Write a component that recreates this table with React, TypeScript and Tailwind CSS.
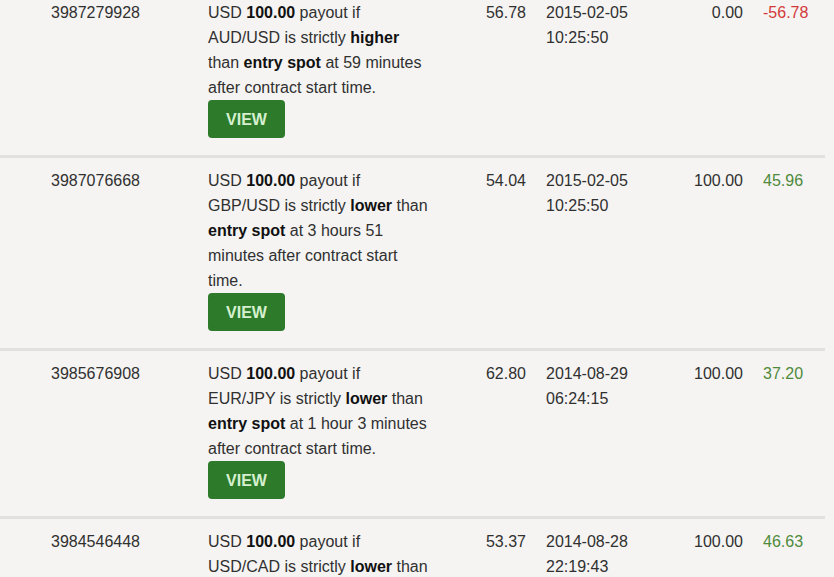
import React from "react";

interface Trade {
  id: string;
  desc: React.ReactNode;
  stake: string;
  date: string;
  time: string;
  payout: string;
  profit: string;
}

const B = ({ children }: { children: React.ReactNode }) => <b className="font-bold text-[#111]">{children}</b>;

const trades: Trade[] = [
  {
    id: "3987279928",
    desc: (
      <>
        USD <B>100.00</B> payout if AUD/USD is strictly <B>higher</B> than <B>entry spot</B> at 59 minutes after contract start time.
      </>
    ),
    stake: "56.78",
    date: "2015-02-05",
    time: "10:25:50",
    payout: "0.00",
    profit: "-56.78",
  },
  {
    id: "3987076668",
    desc: (
      <>
        USD <B>100.00</B> payout if GBP/USD is strictly <B>lower</B> than <B>entry spot</B> at 3 hours 51 minutes after contract start time.
      </>
    ),
    stake: "54.04",
    date: "2015-02-05",
    time: "10:25:50",
    payout: "100.00",
    profit: "45.96",
  },
  {
    id: "3985676908",
    desc: (
      <>
        USD <B>100.00</B> payout if EUR/JPY is strictly <B>lower</B> than <B>entry spot</B> at 1 hour 3 minutes after contract start time.
      </>
    ),
    stake: "62.80",
    date: "2014-08-29",
    time: "06:24:15",
    payout: "100.00",
    profit: "37.20",
  },
  {
    id: "3984546448",
    desc: (
      <>
        USD <B>100.00</B> payout if USD/CAD is strictly <B>lower</B> than <B>entry spot</B> at 2 hours after contract start time.
      </>
    ),
    stake: "53.37",
    date: "2014-08-28",
    time: "22:19:43",
    payout: "100.00",
    profit: "46.63",
  },
];

export default function App() {
  return (
    <div
      className="w-[834px] h-[577px] overflow-hidden bg-[#f5f4f2] text-[#303030] text-[16px] leading-[25px]"
      style={{ fontFamily: '"Liberation Sans", Arial, sans-serif' }}
    >
      <div className="w-[825px]">
        {trades.map((t, i) => {
          const neg = t.profit.startsWith("-");
          return (
            <div
              key={t.id}
              className={`flex border-b-[3px] border-[#e2e1df] pb-[17px] ${i === 0 ? "pt-0" : "pt-[10px]"}`}
            >
              <div className="w-[208px] pl-[51px] shrink-0">{t.id}</div>
              <div className="w-[222px] shrink-0">
                <p>{t.desc}</p>
                <button className="w-[77px] h-[38px] rounded-[4px] bg-[#2c7a2a] text-[#d6f0cf] font-bold text-[16px]">
                  VIEW
                </button>
              </div>
              <div className="w-[96px] shrink-0 text-right">{t.stake}</div>
              <div className="w-[104px] shrink-0 pl-[20px]">
                <div>{t.date}</div>
                <div>{t.time}</div>
              </div>
              <div className="w-[113px] shrink-0 text-right">{t.payout}</div>
              <div className={`pl-[20px] ${neg ? "text-[#d23a3a]" : "text-[#4f8a3c]"}`}>{t.profit}</div>
            </div>
          );
        })}
      </div>
    </div>
  );
}
